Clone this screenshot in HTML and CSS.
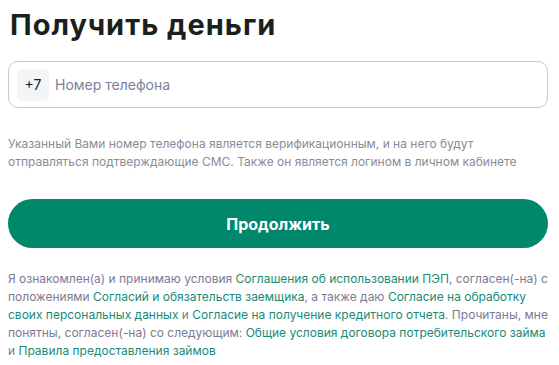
FILE: index.html
```html
<!DOCTYPE html>
<html lang="ru">
  <head>
    <meta charset="UTF-8" />
    <title>Получить деньги</title>
    <link rel="stylesheet" href="styles.css">
  </head>
  <body>
    <main class="form">
      <h1 class="title">Получить деньги</h1>

      <label class="phone-field">
        <span class="phone-prefix">+7</span>
        <input type="tel" class="phone-input" placeholder="Номер телефона" />
      </label>

      <p class="hint">
        Указанный Вами номер телефона является верификационным, и на него будут
        отправляться подтверждающие СМС. Также он является логином в личном кабинете
      </p>

      <button class="submit-button">Продолжить</button>

      <p class="agreement">
        Я ознакомлен(а) и принимаю условия
        <a href="#">Соглашения об использовании ПЭП</a>, согласен(-на) с положениями
        <a href="#">Согласий и обязательств заемщика</a>, а также даю
        <a href="#">Согласие на обработку своих персональных данных</a> и
        <a href="#">Согласие на получение кредитного отчета</a>. Прочитаны, мне
        понятны, согласен(-на) со следующим:
        <a href="#">Общие условия договора потребительского займа</a> и
        <a href="#">Правила предоставления займов</a>
      </p>
    </main>
  </body>
</html>
```

FILE: styles.css
```css
:root {
  --text-dark: #1b1f1d;
  --text-muted: #7d7a92;
  --hint-color: #8a8c99;
  --link-color: #1a8a76;
  --border-color: #c3c8d8;
  --accent-color: #00876c;
  --font-family: "Inter", "Roboto", sans-serif;
}

body {
  margin: 0;
  padding: 8px 11px 8px 8px;
  font-family: var(--font-family);
  background-color: #fff;
  color: var(--text-dark);
}

.form {
  display: flex;
  flex-direction: column;
  width: 540px;
}

.title {
  margin: 0 0 0 2px;
  font-size: 29px;
  line-height: 34px;
  font-weight: 700;
  letter-spacing: 1px;
}

.phone-field {
  display: flex;
  align-items: center;
  gap: 6px;
  margin-top: 19px;
  height: 47px;
  padding: 0 8px;
  border: 1px solid var(--border-color);
  border-radius: 10px;
  box-sizing: border-box;
}

.phone-prefix {
  display: flex;
  align-items: center;
  justify-content: center;
  width: 32px;
  height: 32px;
  border-radius: 5px;
  background-color: #f4f5f8;
  font-size: 14px;
  color: var(--text-dark);
}

.phone-input {
  flex-grow: 1;
  border: none;
  outline: none;
  font-family: var(--font-family);
  font-size: 14px;
  color: var(--text-dark);
  background: transparent;
  padding: 0;
}

.phone-input::placeholder {
  color: #7b819c;
}

.hint {
  margin: 27px 0 0;
  font-size: 12px;
  line-height: 18px;
  color: var(--hint-color);
}

.submit-button {
  margin-top: 28px;
  height: 49px;
  border: none;
  border-radius: 25px;
  background-color: var(--accent-color);
  color: #fff;
  font-family: var(--font-family);
  font-size: 16px;
  font-weight: 700;
  cursor: pointer;
}

.agreement {
  margin: 22px 0 0;
  font-size: 12px;
  line-height: 18px;
  color: var(--text-muted);
}

.agreement a {
  color: var(--link-color);
  text-decoration: none;
}
```
